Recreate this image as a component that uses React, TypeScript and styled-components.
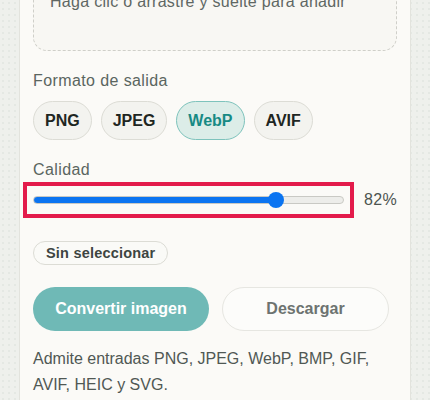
import React, { useState } from 'react'
import styled, { createGlobalStyle } from 'styled-components'

const GlobalStyle = createGlobalStyle`
  html, body {
    margin: 0;
    padding: 0;
    background: #eef0ec;
    font-family: "Liberation Sans", Arial, sans-serif;
  }
  * {
    box-sizing: border-box;
  }
`

const FORMATS = ['PNG', 'JPEG', 'WebP', 'AVIF']

const MIN = 10
const MAX = 100
const SLIDER_WIDTH = 312
const THUMB = 16

export default function App() {
  const [format, setFormat] = useState('WebP')
  const [quality, setQuality] = useState(82)

  const ratio = (quality - MIN) / (MAX - MIN)
  const fill = ((THUMB / 2 + ratio * (SLIDER_WIDTH - THUMB)) / SLIDER_WIDTH) * 100

  return (
    <>
      <GlobalStyle />
      <Page>
        <Card>
          <DropZone>
            <DropText>Haga clic o arrastre y suelte para añadir</DropText>
          </DropZone>

          <Section>
            <Label>Formato de salida</Label>
            <Chips>
              {FORMATS.map((f) => (
                <Chip key={f} $active={f === format} onClick={() => setFormat(f)}>
                  {f}
                </Chip>
              ))}
            </Chips>
          </Section>

          <Section>
            <Label>Calidad</Label>
            <SliderRow>
              <Range
                type="range"
                min={MIN}
                max={MAX}
                value={quality}
                $fill={fill}
                onChange={(e) => setQuality(Number(e.target.value))}
              />
              <Value>{quality}%</Value>
            </SliderRow>
          </Section>

          <Status>Sin seleccionar</Status>

          <Actions>
            <PrimaryButton>Convertir imagen</PrimaryButton>
            <SecondaryButton>Descargar</SecondaryButton>
          </Actions>

          <Note>Admite entradas PNG, JPEG, WebP, BMP, GIF, AVIF, HEIC y SVG.</Note>
        </Card>
      </Page>
    </>
  )
}

const Page = styled.div`
  height: 400px;
  overflow: hidden;
  padding: 0 19px;
  background-color: #eef0ec;
  background-image: radial-gradient(#e4e8e3 1px, transparent 1px);
  background-size: 6px 6px;
`

const Card = styled.div`
  margin-top: -38px;
  padding: 14px 13px 40px;
  background: #fbfaf7;
  border: 1px solid #e2e3dd;
  border-top: none;
  display: flex;
  flex-direction: column;
`

const DropZone = styled.div`
  border: 1px dashed #cfcfc9;
  border-radius: 14px;
  background: #f8f7f3;
  padding: 14px 16px 36px;
  margin-top: -1px;
`

const DropText = styled.div`
  font-size: 16px;
  line-height: 24px;
  color: #5f6763;
  letter-spacing: 0.3px;
`

const Section = styled.div`
  margin-top: 18px;
  display: flex;
  flex-direction: column;
`

const Label = styled.div`
  font-size: 16px;
  line-height: 24px;
  color: #5a6560;
  letter-spacing: 0.4px;
`

const Chips = styled.div`
  display: flex;
  gap: 9px;
  margin-top: 8px;
`

const Chip = styled.button<{ $active?: boolean }>`
  height: 39px;
  padding: 0 11px;
  border-radius: 999px;
  border: 1px solid ${({ $active }) => ($active ? '#7ec3bc' : '#dcdcd5')};
  background: ${({ $active }) => ($active ? '#dcede8' : '#f3f3ef')};
  color: ${({ $active }) => ($active ? '#178a84' : '#1e2622')};
  font-family: inherit;
  font-size: 16px;
  font-weight: 700;
  cursor: pointer;
`

const SliderRow = styled.div`
  display: flex;
  align-items: center;
  gap: 20px;
  margin-top: 10px;
  height: 16px;
`

const Range = styled.input<{ $fill: number }>`
  -webkit-appearance: none;
  appearance: none;
  width: ${SLIDER_WIDTH}px;
  height: ${THUMB}px;
  margin: 0;
  background: transparent;
  outline: 4px solid #e31b4b;
  outline-offset: 6px;

  &::-webkit-slider-runnable-track {
    height: 8px;
    border-radius: 4px;
    border: 1px solid #c9c9c4;
    background: linear-gradient(
      to right,
      #0b74f1 0%,
      #0b74f1 ${({ $fill }) => $fill}%,
      #ededea ${({ $fill }) => $fill}%,
      #ededea 100%
    );
  }

  &::-webkit-slider-thumb {
    -webkit-appearance: none;
    width: ${THUMB}px;
    height: ${THUMB}px;
    margin-top: -5px;
    border-radius: 50%;
    background: #0b74f1;
    border: none;
  }
`

const Value = styled.span`
  font-size: 16px;
  color: #4c5450;
  letter-spacing: 0.3px;
`

const Status = styled.span`
  align-self: flex-start;
  margin-top: 33px;
  height: 24px;
  padding: 0 12px;
  display: inline-flex;
  align-items: center;
  border-radius: 999px;
  border: 1px solid #dcdcd5;
  background: #fafaf7;
  color: #3d4541;
  font-size: 14.5px;
  font-weight: 700;
  letter-spacing: 0.2px;
`

const Actions = styled.div`
  display: flex;
  gap: 13px;
  margin-top: 22px;
`

const PrimaryButton = styled.button`
  height: 44px;
  width: 176px;
  border-radius: 999px;
  border: none;
  background: #6fb9b6;
  color: #ffffff;
  font-family: inherit;
  font-size: 16px;
  font-weight: 700;
  cursor: pointer;
`

const SecondaryButton = styled.button`
  height: 44px;
  width: 167px;
  border-radius: 999px;
  border: 1px solid #e6e6e1;
  background: #fcfcfa;
  color: #6d7370;
  font-family: inherit;
  font-size: 16px;
  font-weight: 700;
  cursor: pointer;
`

const Note = styled.p`
  margin: 15px 0 0;
  font-size: 16px;
  line-height: 26px;
  color: #505854;
  max-width: 350px;
`
